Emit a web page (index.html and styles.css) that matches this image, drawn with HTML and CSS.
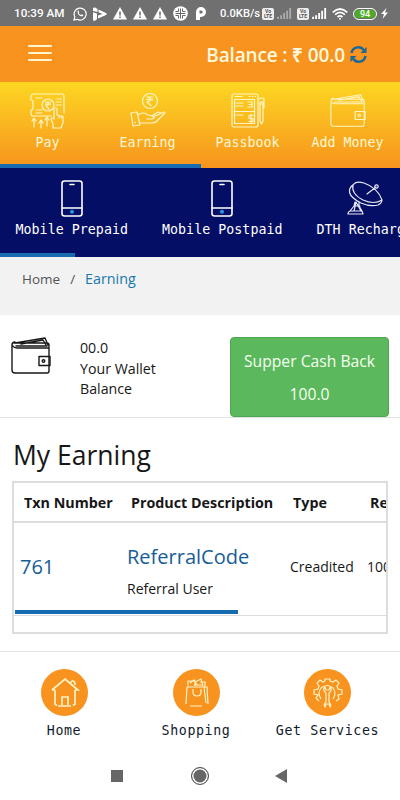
FILE: index.html
```html
<!DOCTYPE html>
<html lang="en">
<head>
<meta charset="utf-8">
<title>My Earning</title>
<link rel="stylesheet" href="styles.css">
</head>
<body>
<svg class="defs" width="0" height="0">
  <defs>
    <symbol id="wallet" viewBox="0 0 40 38">
      <path d="M3 6h33q2 0 2 2v26q0 2-2 2H4q-3 0-3-3V8q0-3 3-3M2 9q1 2 4 2h31M5 9h31M4 6l30-5 3 7M10 7l22-4 3 5"/>
      <path class="clasp" d="M39 19.500H28v9h11z"/><circle cx="32.500" cy="24" r="1.300"/>
    </symbol>
    <symbol id="phone" viewBox="0 0 22 37">
      <rect x="1" y="1" width="20" height="35" rx="2.500"/><path d="M1 28h20M9 4.500h4"/><circle class="dot" cx="11" cy="31.800" r="2"/>
    </symbol>
    <symbol id="warn" viewBox="0 0 14 13"><path d="M7 0l7 12.500H0z" fill="#fff"/><path d="M7 4.500v4M7 9.500v1.500" stroke="#666" stroke-width="1.500"/></symbol>
    <symbol id="bars" viewBox="0 0 16 12"><path d="M0 12V9.500h2V12zM3.300 12V8h2v4zM6.600 12V5.500h2V12zM9.900 12V3h2v9zM13.200 12V0h2v12z"/></symbol>
  </defs>
</svg>
<header class="status">
  <span class="clock">10:39 AM</span>
  <div class="notices">
    <svg width="14" height="14" viewBox="0 0 14 14" fill="none" stroke="#fff" stroke-width="1.200"><path d="M1 13l.8-3.200A6 6 0 1 1 4.200 12.300z"/><path d="M4.500 4.200q.2-1 1-.7l.7 1.700-.6.8q.8 1.500 2.300 2l.8-.8 1.700.8q0 1.400-1.700 1.500Q4.500 8.500 4.500 4.200z" fill="#fff" stroke="none"/></svg>
    <svg width="14" height="14" viewBox="0 0 14 14"><path fill="#fff" d="M0 1.500Q.5 0 2 .5L4.500 2v3L0 4zM5.500 2.500L13 6q1.300 1 0 2L5 11.500V8.500L9.500 7l-4-1.800zM0 5.200l4 1.300v5.800L1.500 14Q0 14 0 12.500z"/></svg>
    <svg width="14" height="13"><use href="#warn"/></svg>
    <svg width="14" height="13"><use href="#warn"/></svg>
    <svg width="14" height="13"><use href="#warn"/></svg>
    <svg width="15" height="15" viewBox="0 0 15 15"><circle cx="7.500" cy="7.500" r="7.300" fill="#fff"/><path d="M7.500 2.500v10M2.500 7.500h10M5.500 2.500v3h-3M9.500 2.500v3h3M5.500 12.500v-3h-3M9.500 12.500v-3h3" stroke="#666" fill="none" stroke-width="1"/></svg>
    <svg class="pbadge" width="10" height="13" viewBox="0 0 10 13"><path fill="#fff" fill-rule="evenodd" d="M0 5a5 5 0 1 1 5 5H4v3H0zM3.500 3.500v3h1.700a1.500 1.500 0 0 0 0-3z"/></svg>
  </div>
  <span class="speed">0.0KB/s</span>
  <span class="volte">Vo<br>LTE</span>
  <svg class="weak" width="15" height="11"><use href="#bars"/></svg>
  <span class="volte second">Vo<br>LTE</span>
  <svg class="strong" width="15" height="11"><use href="#bars"/></svg>
  <svg class="wifi" width="16" height="12" viewBox="0 0 16 12" fill="none" stroke="#fff" stroke-width="1.700"><path d="M.7 4.300Q8-2.300 15.300 4.300M3.100 6.700q4.900-4.500 9.800 0M5.500 9q2.500-2.200 5 0"/><circle cx="8" cy="10.700" r="1" fill="#fff" stroke="none"/></svg>
  <span class="battery">94</span>
  <svg class="bolt" width="7" height="11" viewBox="0 0 7 11"><path fill="#fff" d="M5.500 0L0 6h3L1.500 11 7 4.600H4z"/></svg>
</header>
<div class="appbar">
  <div class="menu"><i></i><i></i><i></i></div>
  <div class="balance"><span>Balance : ₹ 00.0</span>
    <svg width="17" height="17" viewBox="0 0 17 17" fill="none" stroke="#17699b" stroke-width="2.500"><path d="M1.500 7C3 0 11 0 13.500 4M15.500 10C14 17 6 17 3.500 13"/><path d="M16.500 1v6h-6zM.5 16v-6h6z" fill="#17699b" stroke="none"/></svg>
  </div>
</div>
<nav class="tabs">
  <a class="tab"><svg class="line" width="36" height="36" viewBox="0 0 36 36"><path d="M21 23H3q-2 0-2-2v-4q2 0 2-2V9Q3 7 1 7V4q0-3 3-3h28q2 0 2 2v17M6 5h6M27 6h4M26 9h5M26 12h5M6 17h6M6 20h6"/><circle cx="18" cy="12" r="6"/><path d="M15.500 9h5M15.500 11.200h5M16 9q6 2 0 4l3 3M4 34v-8M2 28l2-3 2 3M11 35v-7M9 30l2-3 2 3M17 33v-9M15 27l2-3 2 3M24 26V16q1.500-2.500 3 0v6l6 1.500v6l-2 5.500h-8v-4l-2-5q1-2 3 0M29 22.500v2.500M31.500 23v2"/></svg><span>Pay</span></a>
  <a class="tab"><svg class="line" width="36" height="36" viewBox="0 0 36 36"><circle cx="20" cy="8" r="7.500"/><path d="M17 4h6M17 6.700h6M17 4q8 2.500 0 5l4 3.500M1 20l6-1 3 13-7 1zM5 29v1M8 22q5-4 10 0l5 1q3 2-1 3h-5M23 24l9-4q3-2 3 0l-8 8q-2 2-7 2H10M22 23l6-4 3 1"/></svg><span>Earning</span></a>
  <a class="tab"><svg class="line" width="34" height="36" viewBox="0 0 34 36"><rect x="1" y="1" width="26" height="33" rx="2"/><path d="M3.500 6.500h20v24h-20zM4 3.500h7M18 3.500h1M21 3.500h1M24 3.500h.5M3.500 18.500h20M5 10h2M8 10h4M5 13h2M8 13h4M17 9h4v5h-4M18 11.500h3M5 22h2M8 22h4M22 22.500h-4v3h4v3h-4M20 21v9M29 9h3v19l-1.500 3L29 28zM28 6q3-2 5 0v9M29 11h3"/></svg><span>Passbook</span></a>
  <a class="tab"><svg class="line" width="36" height="36"><use href="#wallet"/></svg><span>Add Money</span></a>
</nav>
<nav class="services">
  <a class="service"><svg class="line phone" width="22" height="37"><use href="#phone"/></svg><span>Mobile Prepaid</span></a>
  <a class="service"><svg class="line phone" width="22" height="37"><use href="#phone"/></svg><span>Mobile Postpaid</span></a>
  <a class="service"><svg class="line dish" width="36" height="37" viewBox="0 0 36 37"><path d="M7 4q2-3 10-1 14 5 18 17 0 3-4 5-8 2-17-2C0 16 0 9 7 4zM6 5q-2 9 10 15 11 5 19 0M20 14L29 7M8 22l-1 4-4 5h12l-3-5v-4M7 26h6M7 31l2-9 5 9M1 34q0-3 3-3h11l1 3z"/><circle cx="29.500" cy="6.500" r="1.700"/></svg><span>DTH Recharge</span></a>
</nav>
<div class="crumbs"><span>Home</span><span>/</span><a>Earning</a></div>
<section class="wallet">
  <svg class="line dark" width="40" height="38"><use href="#wallet"/></svg>
  <p>00.0<br>Your Wallet<br>Balance</p>
  <div class="cashback"><span>Supper Cash Back</span><span>100.0</span></div>
</section>
<main>
  <h1>My Earning</h1>
  <div class="table-wrap">
    <div class="row head"><b>Txn Number</b><b>Product Description</b><b>Type</b><b>Remark</b></div>
    <div class="row body"><a class="num">761</a><div class="product"><a>ReferralCode</a><span>Referral User</span></div><span class="type">Creadited</span><span class="type">100.0</span></div>
  </div>
</main>
<footer class="bottom">
  <a><svg class="round" width="47" height="47" viewBox="0 0 47 47"><circle cx="23.500" cy="23.500" r="23.500"/><path d="M11 21L24 10l13 11h-3M11 21h3M14 21v14l2 1.500M34 21v14l-2 1.500M21 36v-8h6v8M17 37h13M30 14q0-2 2-2t2 4"/></svg><span>Home</span></a>
  <a><svg class="round thin" width="47" height="47" viewBox="0 0 47 47"><circle cx="23.500" cy="23.500" r="23.500"/><path d="M14 18h20l1 17M14 18l-1 17M17 37h12M31 18l2 16M20 20v3q0 4 4 4t4-4v-3M15 18v-6h7v5M17 14l4-3 3 5M22 13l6-3 2 7M27 13h5v5M21 16h9"/></svg><span>Shopping</span></a>
  <a><svg class="round thin" width="47" height="47" viewBox="0 0 47 47"><circle cx="23.500" cy="23.500" r="23.500"/><path d="M15 32l-3-3 2-3-4-1v-4l4-1 1-3-2-3 3-3 3 2 2-1v-2h5v2l3 1 3-2 3 3-2 3 1 3 4 1v4l-4 1 1 4-3 2M17 30q-4-6 0-11 6-5 12 0 4 5 0 11"/><path d="M22 33v-9q-4-3-1-6l1 3h3l1-3q3 3-1 6v9q3 3 1 5l-1-3h-3l-1 3q-2-3 1-5z"/></svg><span>Get Services</span></a>
</footer>
<div class="sysnav"><i class="square"></i><i class="circle"></i><i class="back"></i></div>
</body>
</html>
```
FILE: styles.css
```css
* { box-sizing: border-box; }
body { margin: 0; width: 400px; height: 800px; overflow: hidden; background: #fff; color: #171717; font-family: "Open Sans", sans-serif; display: flex; flex-direction: column; }
body > * { flex-shrink: 0; }
.defs { position: absolute; }
.status { height: 26px; background: #707070; color: #fff; display: flex; align-items: center; padding: 1px 0 0 14px; font: 500 11.700px/25px Roboto, sans-serif; }
.clock { width: 59px; white-space: nowrap; }
.notices { display: flex; align-items: center; gap: 6px; width: 147px; }
.pbadge { margin-left: 2px; }
.speed { width: 42px; font-size: 11.200px; white-space: nowrap; }
.volte { width: 12px; height: 12px; border-radius: 2px; background: #eee; color: #555; font: 700 5px/5px Roboto, sans-serif; padding-top: 1px; text-align: center; overflow: hidden; }
.weak { margin-left: 3px; fill: #aaa; }
.second { margin-left: 5px; }
.strong { margin-left: 3px; fill: #fff; }
.wifi { margin-left: 5px; }
.battery { margin-left: 5px; width: 24px; height: 12px; border: 1px solid #fff; border-radius: 6px; background: #4cad24; box-shadow: inset 0 0 0 1px #707070; font-size: 9px; line-height: 10px; text-align: center; }
.bolt { margin-left: 4px; }
.appbar { height: 56px; background: #f7931e; display: flex; justify-content: space-between; align-items: center; padding: 0 33px 0 28px; }
.menu { display: flex; flex-direction: column; gap: 4.500px; margin-top: -2px; }
.menu i { width: 24px; height: 2.500px; border-radius: 1px; background: #fff5ce; }
.balance { display: flex; align-items: center; gap: 5px; color: #fff8dc; font-size: 19px; font-weight: 600; white-space: nowrap; letter-spacing: -.15px; }
.balance span { margin-top: 1px; }
.tabs, .services, .bottom { font-family: "DejaVu Sans Mono", monospace; font-size: 13.300px; line-height: 18px; white-space: nowrap; }
.tabs { height: 86px; display: grid; grid-template-columns: repeat(4, 100px); color: #fff8d4; background: linear-gradient(90deg, #176bb0 201px, transparent 201px) 0 100% / 100% 4px no-repeat, linear-gradient(#fdd722, #f7931e); }
.tab, .service { display: flex; flex-direction: column; align-items: center; }
.tab { padding: 11px 5px 0 0; gap: 5px; }
.line { fill: none; stroke: #fff5c6; stroke-width: 1.200; stroke-linejoin: round; stroke-linecap: round; }
.services { height: 89px; display: flex; gap: 34px; padding: 12px 0 0 15.500px; overflow: hidden; color: #fff; background: linear-gradient(90deg, #176bb0 75px, transparent 75px) 0 100% / 100% 4px no-repeat, #040e64; }
.service { gap: 4px; letter-spacing: .03px; }
.phone { stroke: #fff; stroke-width: 1.600; }
.dot { fill: #259be5; stroke: none; }
.dish { stroke: #e5e7f7; }
.crumbs { height: 58px; background: #f2f2f2; display: flex; gap: 10px; padding: 12px 22px; font-size: 13.500px; line-height: 20px; color: #555; }
.crumbs a { color: #1678ae; font-size: 14.300px; }
.wallet { height: 103px; display: flex; padding: 22px 11px 0; border-bottom: 1px solid #e3e3e3; }
.dark { stroke: #171717; stroke-width: 1.400; }
.wallet p { margin: 1px 0 0 29px; width: 150px; font-size: 14.200px; line-height: 20.500px; }
.cashback { width: 159px; height: 80px; border: 1px solid #4da651; border-radius: 4px; background: #5cb85c; color: #f5fff2; font-size: 15.700px; line-height: 33px; text-align: center; padding-top: 7px; display: flex; flex-direction: column; white-space: nowrap; }
main { height: 233px; padding: 19px 12px 0; }
h1 { margin: 0 0 0 1px; font-weight: 400; font-size: 26.500px; line-height: 37px; }
.table-wrap { margin-top: 7px; height: 153px; border: 2px solid #ddd; overflow: hidden; }
.row { display: grid; white-space: nowrap; align-items: center; }
.head { height: 40px; grid-template-columns: 107px 162px 77px 80px; padding-left: 10px; font-size: 14.300px; border-bottom: 2px solid #ddd; }
.head b { font-weight: 700; }
.body { height: 93px; grid-template-columns: 108px 162px 77px 80px; padding-left: 6px; font-size: 14px; background: linear-gradient(90deg, #176bb0, #176bb0) 1px 87px / 223px 4px no-repeat; border-bottom: 1px solid #ddd; }
.row a { color: #165c96; font-size: 20px; line-height: 32px; }
.num, .type { margin-top: -5px; }
.product { display: flex; flex-direction: column; line-height: 32px; margin: 8px 0 0 -1px; }
.bottom { height: 101px; border-top: 1px solid #e5e5e5; display: grid; grid-template-columns: 128px 136px 127px; padding-top: 17px; color: #101a2c; }
.bottom a { display: flex; flex-direction: column; align-items: center; gap: 6px; }
.bottom span { letter-spacing: .6px; }
.round { fill: none; stroke: #fff4c6; stroke-width: 1.700; }
.round circle { fill: #f7931e; stroke: none; }
.thin { stroke-width: 1.200; }
.sysnav { height: 48px; display: flex; align-items: center; padding-left: 111px; }
.square { width: 12px; height: 12px; background: #666; }
.circle { width: 18px; height: 18px; margin-left: 68px; border: 1.500px solid #555; border-radius: 50%; background: #666; box-shadow: inset 0 0 0 1.500px #fff; }
.back { margin-left: 66px; border: solid transparent; border-width: 7px 12px 7px 0; border-right-color: #666; }
```
